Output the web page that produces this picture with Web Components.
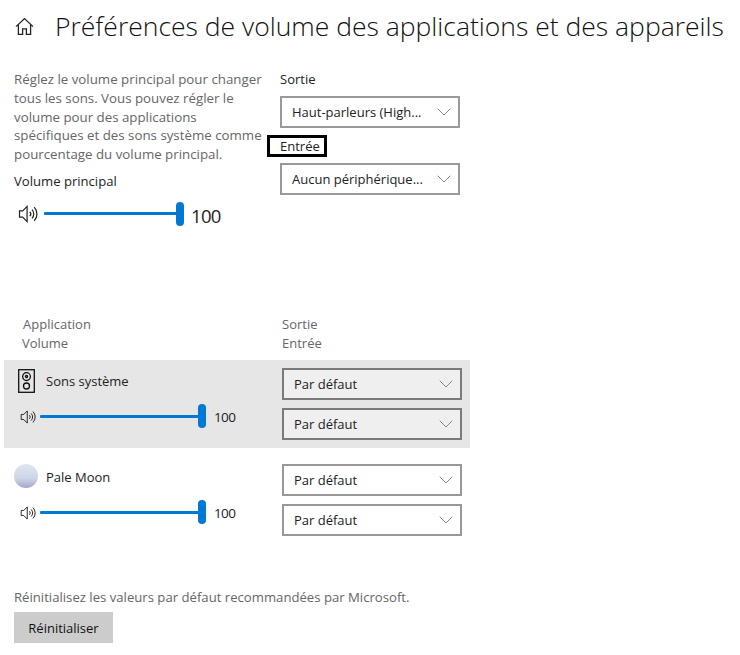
<!DOCTYPE html>
<html lang="fr"><head><meta charset="utf-8"><title>Volume</title>
<style>html,body{margin:0;background:#fff}body{font-family:"Open Sans","Noto Sans","Liberation Sans",sans-serif;color:#222}</style>
</head><body>
<x-page></x-page>
<script>
const speaker=`<svg width="100%" height="100%" viewBox="0 0 20 20" fill="none" stroke="#222" stroke-width="1.2"><path d="M1.500 6.800h3.200l4.400-4.400v15.200l-4.400-4.400H1.500z"/><path d="M11.800 7.800a3.200 3.200 0 0 1 0 4.400"/><path d="M14 5.600a6.400 6.400 0 0 1 0 8.800"/><path d="M16.200 3.200a9.800 9.800 0 0 1 0 13.600"/></svg>`;
function def(name,html){customElements.define(name,class extends HTMLElement{connectedCallback(){if(this.shadowRoot)return;const r=this.attachShadow({mode:'open'});r.innerHTML=typeof html==='function'?html(this):html;}})}
def('x-header',`<style>:host{display:flex;align-items:center;height:52px;padding-left:15px}
svg{width:19px;height:19px;flex:none;margin-right:21px}
h1{margin:0;font-weight:300;font-size:26.5px;color:#111;white-space:nowrap;line-height:52px}</style>
<svg viewBox="0 0 19 19" fill="none" stroke="#222" stroke-width="1.3"><path d="M1 9.600 9.500 1.600 18 9.600"/><path d="M3.400 7.600V17.400h4.200v-5.600h3.800v5.600h4.200V7.600"/></svg><h1><slot></slot></h1>`);
def('x-dropdown',`<style>:host{display:flex;box-sizing:border-box;width:180px;height:32px;align-items:center;justify-content:space-between;border:2px solid #999;padding:0 7px 0 10px;font-size:13px;color:#222;background:#fff}
:host([shade]){background:#efefef;border-color:#7a7a7a}
svg{width:14px;height:8px;flex:none}</style><span><slot></slot></span>
<svg viewBox="0 0 14 8" fill="none" stroke="#888" stroke-width="1"><path d="M.7.700 7 7l6.300-6.300"/></svg>`);
def('x-slider',h=>{const big=h.hasAttribute('big');return `<style>:host{display:flex;align-items:center;height:24px}
.i{flex:none;width:${big?20:16}px;height:${big?20:16}px;margin-right:${big?6:4}px}
.t{position:relative;flex:none;width:${big?136:162}px;height:3px;background:#0078d4;border-radius:1px}
.t::after{content:"";position:absolute;right:-4px;top:-10.5px;width:8px;height:24px;border-radius:4px;background:#0078d4}
.v{flex:none;margin-left:${big?11:12}px;font-size:${big?18.5:13.5}px;letter-spacing:${big?-.7:-.6}px;color:#222;padding-top:${big?3:1}px}</style>
<span class="i">${speaker}</span><span class="t"></span><span class="v"><slot></slot></span>`});
def('x-button',`<style>:host{display:inline-flex;box-sizing:border-box;height:31px;width:99px;align-items:center;justify-content:center;background:#ccc;font-size:13px;color:#111}</style><slot></slot>`);
def('x-mixer-row',h=>{const shade=h.hasAttribute('shade');return `<style>:host{display:grid;grid-template-columns:278px 180px;box-sizing:border-box;width:466px;height:88px;background:${shade?'#e6e6e6':'transparent'};padding-top:8px}
.app{display:flex;flex-direction:column}
.n{display:flex;align-items:center;height:26px;padding-left:10px;font-size:13px;color:#222}
.ic{width:24px;height:24px;margin-right:8px;display:flex;justify-content:center;flex:none}
x-slider{margin:10px 0 0 16px}
.dd{display:flex;flex-direction:column;gap:8px}</style>
<div class="app"><div class="n"><span class="ic"><slot name="icon"></slot></span><slot></slot></div><x-slider>100</x-slider></div>
<div class="dd"><x-dropdown ${shade?'shade':''}>Par défaut</x-dropdown><x-dropdown ${shade?'shade':''}>Par défaut</x-dropdown></div>`});
def('x-page',`<style>:host{display:block;width:740px;height:655px;overflow:hidden;box-sizing:border-box}
.top{display:grid;grid-template-columns:266px 180px;padding-left:14px;margin-top:18px;height:245px}
p{margin:0;font-size:13.3px;line-height:18.75px;color:#666;white-space:nowrap}
.vp{font-size:13.1px;color:#222;margin:7px 0 0;line-height:20px}
x-slider{margin:11px 0 0 4px}
.right{margin-top:-1px}
.lab{font-size:13px;line-height:20px;color:#222;height:20px}
.lab.s{margin-bottom:7px}
.lab.f{box-sizing:border-box;width:60px;height:22px;line-height:16px;border:3px solid #000;margin:7px 0 6px -13px;padding-left:10px;display:block}
.hd{display:grid;grid-template-columns:259px 200px;padding:0 0 0 23px;font-size:13px;line-height:19px;color:#666;height:45px}
.rows{padding-left:4px;display:flex;flex-direction:column;gap:8px}
.reset{padding:0 0 0 14px;margin-top:43px}
.reset p{font-size:13.15px;line-height:20px;margin-bottom:5px}
</style>
<x-header>Préférences de volume des applications et des appareils</x-header>
<div class="top">
<div><p>Réglez le volume principal pour changer<br>tous les sons. Vous pouvez régler le<br>volume pour des applications<br>spécifiques et des sons système comme<br>pourcentage du volume principal.</p>
<div class="vp">Volume principal</div><x-slider big>100</x-slider></div>
<div class="right"><div class="lab s">Sortie</div><x-dropdown>Haut-parleurs (High...</x-dropdown><div class="lab f">Entrée</div><x-dropdown>Aucun périphérique...</x-dropdown></div>
</div>
<div class="hd"><div>Application<br><span style="margin-left:-1px">Volume</span></div><div>Sortie<br>Entrée</div></div>
<div class="rows">
<x-mixer-row shade><svg slot="icon" width="17" height="24" viewBox="0 0 17 24" fill="none" stroke="#111" stroke-width="1.3"><rect x=".7" y=".7" width="15.600" height="22.600"/><circle cx="8.500" cy="7.600" r="3.900"/><circle cx="8.500" cy="7.600" r="1.100"/><circle cx="8.500" cy="17" r="3"/></svg>Sons système</x-mixer-row>
<x-mixer-row><svg slot="icon" style="margin-top:-1px" width="24" height="24" viewBox="0 0 24 24"><defs><linearGradient id="m" x1="0" y1="0" x2="0" y2="1"><stop offset="0" stop-color="#dfe6ef"/><stop offset=".6" stop-color="#ccd6e6"/><stop offset="1" stop-color="#a7a5c8"/></linearGradient></defs><circle cx="12" cy="12" r="12" fill="url(#m)"/></svg>Pale Moon</x-mixer-row>
</div>
<div class="reset"><p>Réinitialisez les valeurs par défaut recommandées par Microsoft.</p><x-button>Réinitialiser</x-button></div>`);
</script>
</body></html>
